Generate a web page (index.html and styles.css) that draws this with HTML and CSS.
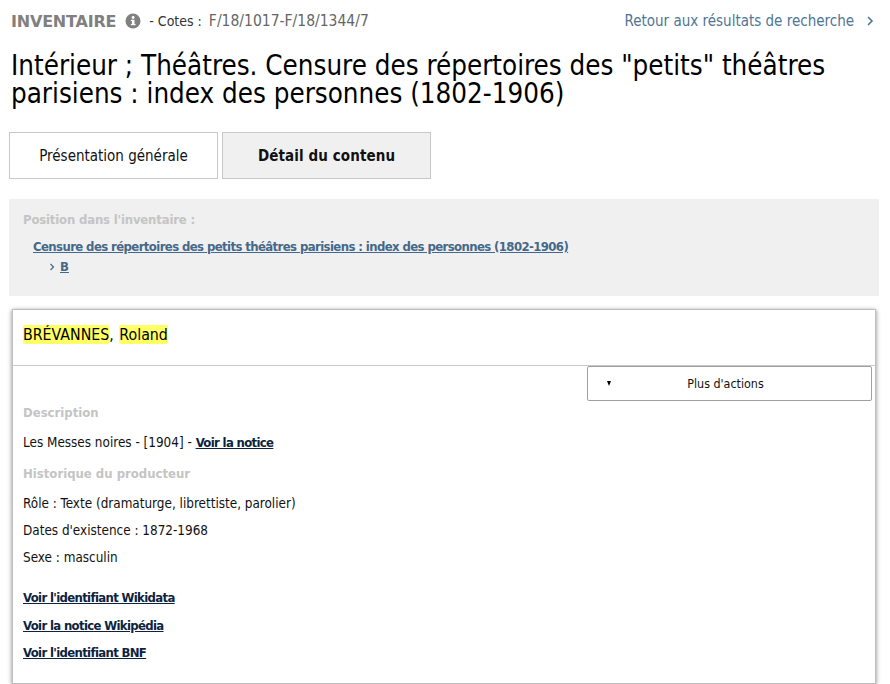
FILE: index.html
```html
<!DOCTYPE html>
<html lang="fr">
<head>
<meta charset="utf-8">
<title>Inventaire</title>
<link rel="stylesheet" href="styles.css">
</head>
<body>
<header class="top">
  <div class="crumb">
    <span class="kind">INVENTAIRE</span>
    <svg class="info" viewBox="0 0 16 16" width="16" height="16"><circle cx="8" cy="8" r="7.5" fill="#808080"/><rect x="6.9" y="6.8" width="2.6" height="5.2" fill="#fff"/><rect x="5.9" y="6.8" width="2" height="1.2" fill="#fff"/><rect x="5.9" y="11" width="4.6" height="1.2" fill="#fff"/><circle cx="8.1" cy="4.5" r="1.4" fill="#fff"/></svg>
    <span class="dash">- Cotes :</span>
    <span class="cotes">F/18/1017-F/18/1344/7</span>
  </div>
  <a class="back" href="#">Retour aux résultats de recherche<svg class="chev" viewBox="0 0 8 10" width="8" height="10"><path d="M2 1l4 4-4 4" fill="none" stroke="#4f7596" stroke-width="1.6"/></svg></a>
</header>
<h1>Intérieur ; Théâtres. Censure des répertoires des "petits" théâtres parisiens : index des personnes (1802-1906)</h1>
<nav class="tabs">
  <a class="tab" href="#">Présentation générale</a>
  <a class="tab active" href="#">Détail du contenu</a>
</nav>
<section class="position">
  <div class="pos-label">Position dans l'inventaire :</div>
  <a class="pos-link" href="#">Censure des répertoires des petits théâtres parisiens : index des personnes (1802-1906)</a>
  <div class="pos-sub"><svg class="pos-chev" viewBox="0 0 6 8" width="6" height="8"><path d="M1.5 1l3 3-3 3" fill="none" stroke="#44688a" stroke-width="1.2"/></svg><a class="pos-b" href="#">B</a></div>
</section>
<article class="card">
  <div class="card-head"><mark>BRÉVANNES</mark>, <mark class="given">Roland</mark></div>
  <div class="actions">
    <button class="more" type="button"><span class="caret"></span><span class="more-text">Plus d'actions</span></button>
  </div>
  <div class="card-body">
    <h2 class="h-desc">Description</h2>
    <p class="p-desc">Les Messes noires - [1904] - <a class="strong" href="#">Voir la notice</a></p>
    <h2 class="h-hist">Historique du producteur</h2>
    <p class="line first">Rôle : Texte (dramaturge, librettiste, parolier)</p>
    <p class="line">Dates d'existence : 1872-1968</p>
    <p class="line">Sexe : masculin</p>
    <ul class="links">
      <li><a class="strong" href="#">Voir l'identifiant Wikidata</a></li>
      <li><a class="strong" href="#">Voir la notice Wikipédia</a></li>
      <li><a class="strong" href="#">Voir l'identifiant BNF</a></li>
    </ul>
  </div>
</article>
</body>
</html>
```
FILE: styles.css
```css
* { box-sizing: border-box; }
html, body { height: 684px; overflow: hidden; }
body {
  margin: 0;
  padding: 0 11px 0 9px;
  background: #fff;
  color: #000;
  font-family: "DejaVu Sans Condensed", "DejaVu Sans", sans-serif;
  font-size: 13px;
}
.top {
  display: flex;
  justify-content: space-between;
  align-items: center;
  height: 20px;
  margin-top: 11px;
  padding-left: 2px;
}
.crumb { display: flex; align-items: center; }
.kind {
  font-family: "DejaVu Sans", sans-serif;
  font-weight: bold;
  font-size: 16px;
  color: #808080;
  letter-spacing: -0.2px;
}
.info { margin-left: 9px; }
.dash { margin-left: 8px; font-size: 14px; color: #333; }
.cotes { margin-left: 7px; font-size: 15.5px; color: #666; }
.back {
  display: flex;
  align-items: center;
  gap: 12px;
  padding-right: 4px;
  font-size: 15px;
  color: #4f7596;
  text-decoration: none;
}
.chev { margin-right: 1px; }
h1 {
  margin: 20px 0 0;
  padding-left: 2px;
  font-size: 27.5px;
  font-weight: normal;
  line-height: 28px;
  height: 56px;
}
.tabs { display: flex; gap: 4px; margin-top: 25px; }
.tab {
  display: flex;
  align-items: center;
  justify-content: center;
  width: 209px;
  height: 47px;
  border: 1px solid #c8c8c8;
  font-size: 15px;
  color: #111;
  text-decoration: none;
}
.tab.active { background: #f0f0f0; font-weight: bold; letter-spacing: 0.1px; }
.position {
  height: 97px;
  margin-top: 20px;
  padding: 14px 14px 0;
  background: #f0f0f0;
}
.pos-label { font-size: 13px; font-weight: bold; color: #c4c4c4; line-height: 14px; letter-spacing: -0.18px; }
.pos-link {
  display: block;
  margin: 13px 0 0 10px;
  font-size: 13px;
  font-weight: bold;
  line-height: 14px;
  letter-spacing: -0.6px;
  color: #44688a;
}
.pos-sub { display: flex; align-items: center; gap: 5px; margin: 6px 0 0 26px; line-height: 14px; }
.pos-b { font-weight: bold; color: #44688a; }
.card {
  height: 375px;
  margin: 13px 3px 0;
  border: 1px solid #c0c0c0;
  box-shadow: -1px 1px 4px rgba(0,0,0,.25), 1px 1px 4px rgba(0,0,0,.25);
  background: #fff;
}
.card-head {
  height: 56px;
  padding: 15px 10px 0;
  font-size: 15.8px;
  line-height: 19px;
  border-bottom: 1px solid #c8c8c8;
}
mark { background: #ffff66; color: #000; border-radius: 2px; }
.given { margin-left: 1px; }
.actions { display: flex; justify-content: flex-end; padding-right: 3px; }
.more {
  display: flex;
  align-items: center;
  width: 285px;
  height: 35px;
  padding: 0 0 0 19px;
  background: #fff;
  border: 1px solid #a0a0a0;
  border-radius: 2px;
  font-family: inherit;
  font-size: 12.4px;
  color: #111;
}
.caret {
  width: 0;
  height: 0;
  border-left: 2.5px solid transparent;
  border-right: 2.5px solid transparent;
  border-top: 5px solid #000;
}
.more-text { flex: 1; text-align: center; padding-right: 31px; }
.card-body { padding: 0 10px; }
h2 { margin: 0; font-size: 13px; font-weight: bold; color: #c4c4c4; line-height: 14px; }
.h-desc { margin-top: 5px; }
p { margin: 0; font-size: 13.4px; line-height: 14px; color: #111; }
.p-desc { margin-top: 16px; }
.h-hist { margin-top: 17px; }
.line { margin-top: 13px; }
.line.first { margin-top: 16px; }
.strong { font-size: 13px; font-weight: bold; letter-spacing: -0.66px; color: #0c2340; }
.links { list-style: none; margin: 26px 0 0; padding: 0; display: grid; row-gap: 13.5px; line-height: 14px; }
```
